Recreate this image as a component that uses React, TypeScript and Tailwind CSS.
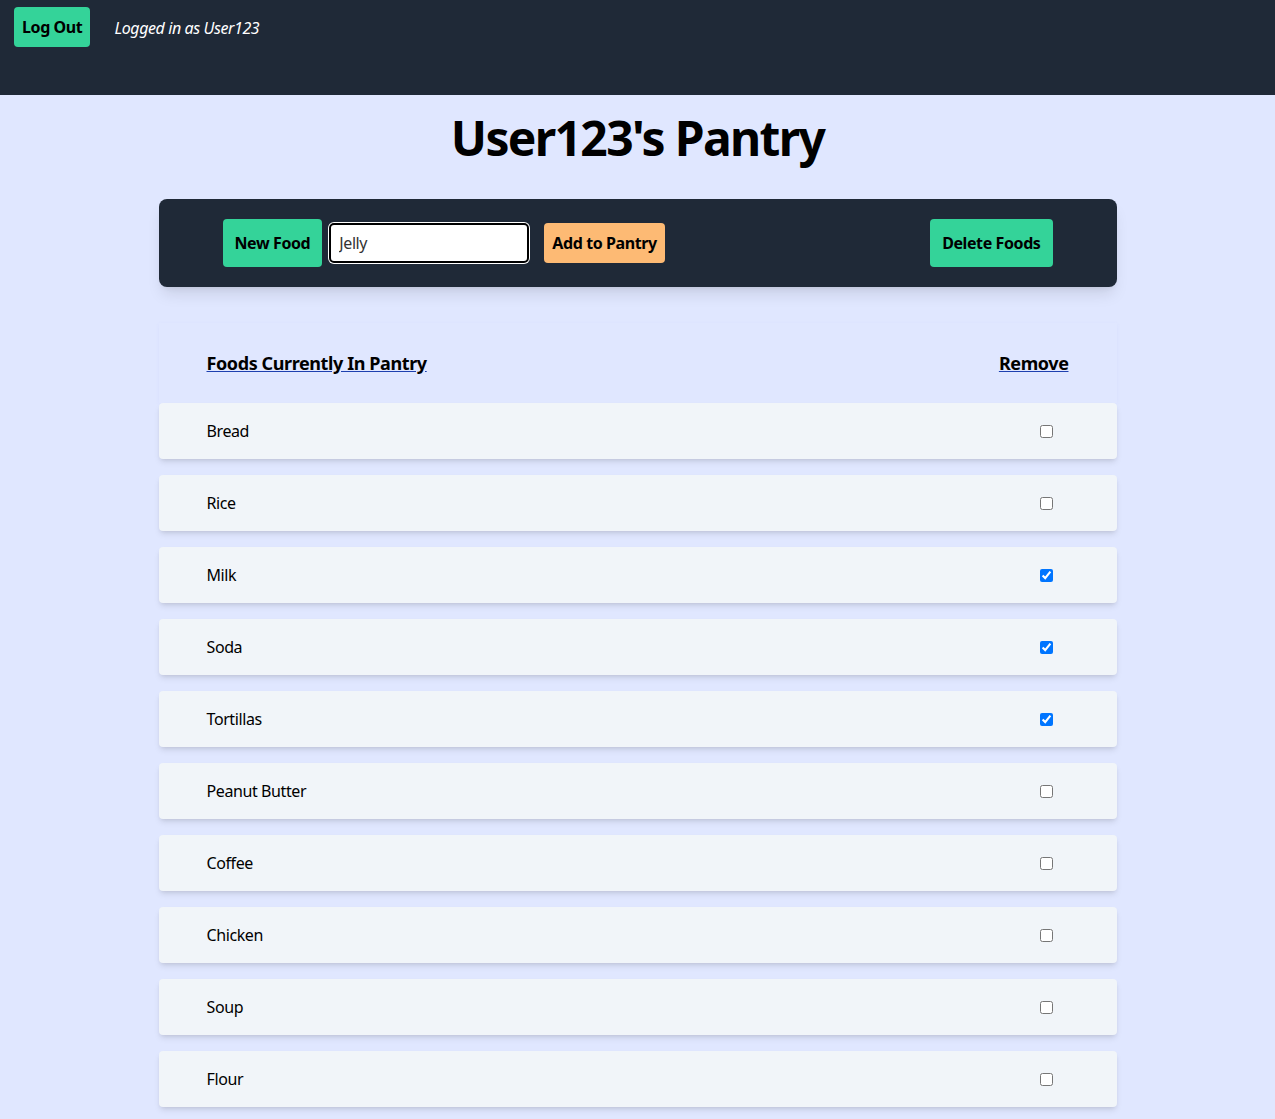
import { useState } from "react";

const FOODS = [
  { name: "Bread", checked: false },
  { name: "Rice", checked: false },
  { name: "Milk", checked: true },
  { name: "Soda", checked: true },
  { name: "Tortillas", checked: true },
  { name: "Peanut Butter", checked: false },
  { name: "Coffee", checked: false },
  { name: "Chicken", checked: false },
  { name: "Soup", checked: false },
  { name: "Flour", checked: false },
];

export default function App() {
  const [foods, setFoods] = useState(FOODS);
  const [newFood, setNewFood] = useState("Jelly");

  const toggle = (i: number) => {
    setFoods(foods.map((f, j) => (j === i ? { ...f, checked: !f.checked } : f)));
  };

  return (
    <div className="min-h-screen bg-[#e0e7ff] text-black tracking-tight font-['Noto_Sans',sans-serif]">
      {/* Top bar */}
      <div className="h-[95px] bg-[#1f2937] flex items-start px-[14px] pt-[7px]">
        <button className="h-10 px-2 rounded bg-[#34d399] font-bold text-base">Log Out</button>
        <span className="ml-6 mt-[9px] italic text-white text-base">Logged in as User123</span>
      </div>

      <h1 className="text-center text-5xl font-bold tracking-[-0.035em] pt-[11px] pb-[29px] leading-[64px]">User123's Pantry</h1>

      <div className="w-[958px] mx-auto">
        {/* Toolbar */}
        <div className="bg-[#1f2937] rounded-lg shadow-lg px-16 py-5 flex items-center justify-between">
          <div className="flex items-center">
            <button className="h-12 px-3 rounded bg-[#34d399] font-bold text-base">New Food</button>
            <input
              value={newFood}
              onChange={(e) => setNewFood(e.target.value)}
              className="ml-[7px] w-[200px] h-10 rounded-[5px] bg-white border-2 border-black ring-1 ring-white px-2 text-base text-[#333]"
            />
            <button className="ml-[15px] h-10 px-2 rounded bg-[#fdba74] font-bold text-base">Add to Pantry</button>
          </div>
          <button className="h-12 px-3 rounded bg-[#34d399] font-bold text-base">Delete Foods</button>
        </div>

        {/* List header */}
        <div className="mt-9 h-20 px-12 flex items-center justify-between shadow-[0_1px_4px_rgba(99,102,241,0.06)]">
          <span className="text-lg font-bold underline decoration-[#1e40af]">Foods Currently In Pantry</span>
          <span className="text-lg font-bold underline decoration-[#1e40af]">Remove</span>
        </div>

        <div className="flex flex-col gap-4 pb-6">
          {foods.map((f, i) => (
            <div key={f.name} className="h-14 bg-[#f1f5f9] rounded shadow-md pl-12 pr-16 flex items-center justify-between">
              <span className="text-base">{f.name}</span>
              <input type="checkbox" checked={f.checked} onChange={() => toggle(i)} className="w-[13px] h-[13px]" />
            </div>
          ))}
        </div>
      </div>
    </div>
  );
}
